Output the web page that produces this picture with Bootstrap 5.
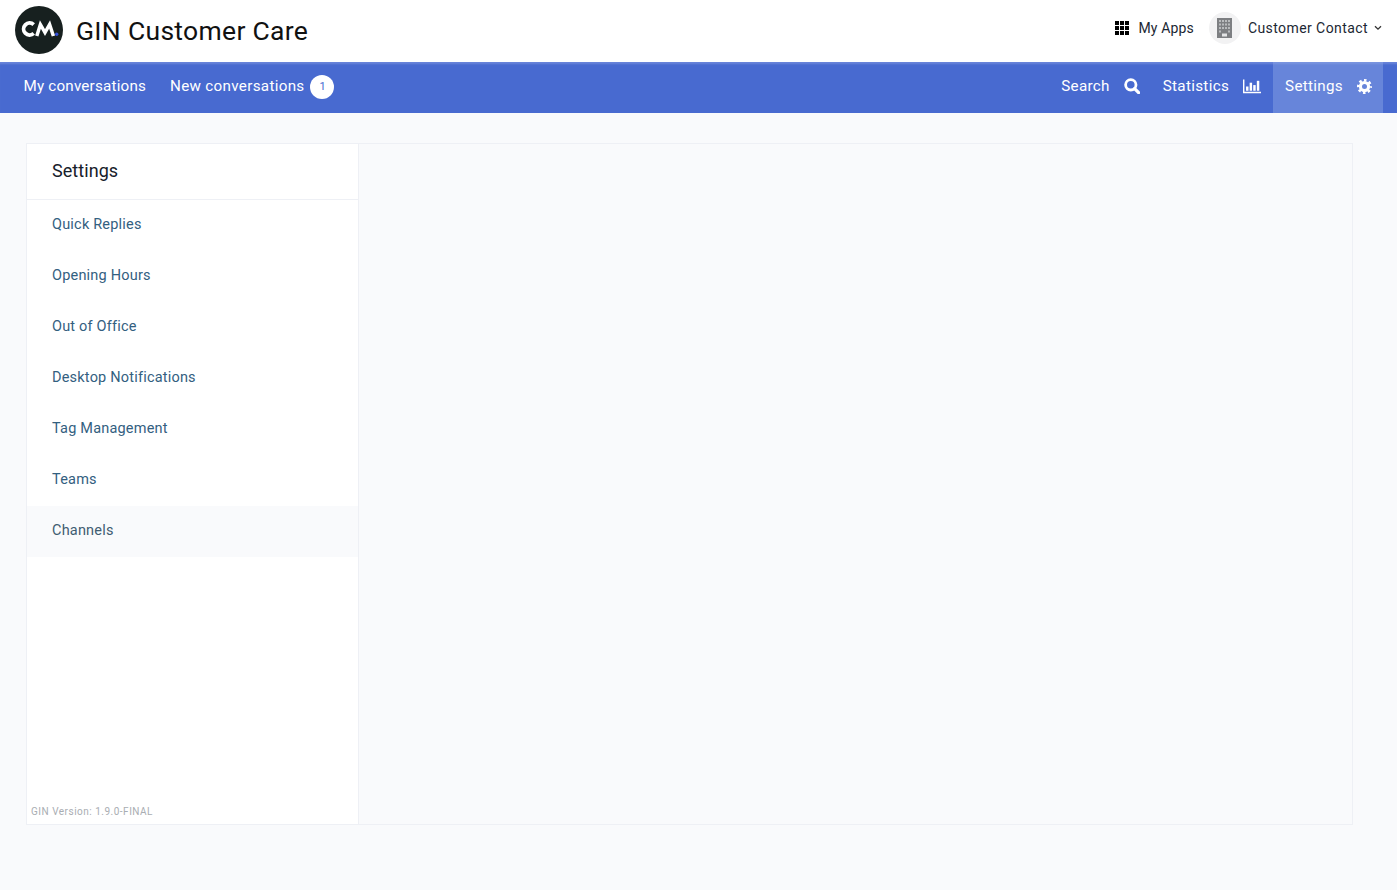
<!DOCTYPE html>
<html lang="en">
<head>
<meta charset="utf-8">
<title>GIN Customer Care</title>
<link rel="stylesheet" href="https://cdn.jsdelivr.net/npm/bootstrap@5.3.0/dist/css/bootstrap.min.css">
<style>
html,body{height:100%}
body{background:#f9fafc;font-family:"Roboto","Liberation Sans",sans-serif;color:#16202a;overflow:hidden}
.top-head{height:62px;background:#fff;padding:0 15px}
.logo-mark{margin-bottom:2px}
.brand-name{font-size:26.5px;line-height:32px;color:#111;margin-left:13px;font-weight:400;letter-spacing:.3px}
.top-group{padding-bottom:6px}
.top-link{font-size:14px;color:#1b2733;text-decoration:none;letter-spacing:.42px}
.apps-link{letter-spacing:.15px;margin-right:15px}
.apps-link svg{margin-right:9px}
.avatar-disc{width:32px;height:32px;border-radius:50%;background:#f2f2f3;margin-right:7px}
.chev-mark{margin-left:6px}
.blue-bar{height:51px;background:#486ad0;box-shadow:inset 0 3px 2px -1px #6a85da;padding:0 14px 0 11.500px}
.bar-link{display:flex;align-items:center;height:100%;padding:0 12px 3px;color:#fff;font-size:15.200px;letter-spacing:.2px;text-decoration:none}
.bar-link svg{margin-left:14px}
.wide-track{letter-spacing:.31px}
.search-link{padding-right:11px}
.bar-link.current{background:#6785da;box-shadow:inset 0 3px 2px -1px #7b95e0;padding-right:11px}
.count-pill{width:24px;height:24px;border-radius:50%;background:#fff;color:#486ad0;font-size:11px;margin-left:6px;position:relative;top:1px;letter-spacing:0}
.panel-wrap{margin:30px 44px 0 26px;height:682px;border:1px solid #eef0f5;background:#f9fafc}
.side-col{width:332px;background:#fff;border-right:1px solid #eef0f5;position:relative}
.side-title{height:56px;padding:0 25px 2px;font-size:18px;letter-spacing:.05px;color:#16202a;border-bottom:1px solid #eef0f5}
.side-item{display:flex;align-items:center;height:51px;padding:0 25px 2px;font-size:14.500px;letter-spacing:.2px;color:#33607f;text-decoration:none}
.side-item.current{background:#f9fafc;color:#3f5d72}
.version-note{position:absolute;left:4px;bottom:5px;font-size:10px;letter-spacing:.5px;color:#a9adb2}
</style>
</head>
<body>
<header class="top-head d-flex align-items-center justify-content-between">
  <a class="d-flex align-items-center text-decoration-none" href="#">
    <svg class="logo-mark" width="48" height="48" viewBox="0 0 48 48" aria-label="CM logo">
      <circle cx="24" cy="24" r="24" fill="#17201f"/>
      <path d="M18.700 18.600a6 6 0 1 0 0 8.800" fill="none" stroke="#fff" stroke-width="3.800"/>
      <path d="M21.800 30l3.600-11.500 4.600 8 4.600-8L38.400 30" fill="none" stroke="#fff" stroke-width="3.500" stroke-linejoin="miter"/>
      <circle cx="41.700" cy="28.300" r="1.700" fill="#3450d8"/>
    </svg>
    <span class="brand-name">GIN Customer Care</span>
  </a>
  <div class="top-group d-flex align-items-center">
    <a href="#" class="top-link apps-link d-flex align-items-center">
      <svg width="14" height="14" viewBox="0 0 15 15" fill="#000"><rect x="0" y="0" width="4.300" height="4.300"/><rect x="5.350" y="0" width="4.300" height="4.300"/><rect x="10.700" y="0" width="4.300" height="4.300"/><rect x="0" y="5.350" width="4.300" height="4.300"/><rect x="5.350" y="5.350" width="4.300" height="4.300"/><rect x="10.700" y="5.350" width="4.300" height="4.300"/><rect x="0" y="10.700" width="4.300" height="4.300"/><rect x="5.350" y="10.700" width="4.300" height="4.300"/><rect x="10.700" y="10.700" width="4.300" height="4.300"/></svg>
      My Apps
    </a>
    <span class="avatar-disc d-flex align-items-center justify-content-center">
      <svg width="15" height="20" viewBox="0 0 15 20"><rect width="15" height="20" fill="#7d7f82"/><g fill="#b9bbbd"><rect x="2" y="2" width="2" height="2"/><rect x="5" y="2" width="2" height="2"/><rect x="8" y="2" width="2" height="2"/><rect x="11" y="2" width="2" height="2"/><rect x="2" y="5.500" width="2" height="2"/><rect x="5" y="5.500" width="2" height="2"/><rect x="8" y="5.500" width="2" height="2"/><rect x="11" y="5.500" width="2" height="2"/><rect x="2" y="9" width="2" height="2"/><rect x="5" y="9" width="2" height="2"/><rect x="8" y="9" width="2" height="2"/><rect x="11" y="9" width="2" height="2"/><rect x="2" y="12.500" width="2" height="2"/><rect x="11" y="12.500" width="2" height="2"/><rect x="5" y="15.500" width="5" height="3" fill="#e4e5e6"/></g></svg>
    </span>
    <a href="#" class="top-link d-flex align-items-center">
      Customer Contact
      <svg class="chev-mark" width="8" height="6" viewBox="0 0 8 6"><path d="M1 1.200l3 3 3-3" fill="none" stroke="#333" stroke-width="1.300"/></svg>
    </a>
  </div>
</header>
<nav class="blue-bar d-flex justify-content-between">
  <div class="d-flex">
    <a class="bar-link" href="#">My conversations</a>
    <a class="bar-link wide-track" href="#">New conversations<span class="count-pill d-flex align-items-center justify-content-center">1</span></a>
  </div>
  <div class="d-flex">
    <a class="bar-link wide-track search-link" href="#">Search
      <svg width="16" height="16" viewBox="0 0 16 16"><circle cx="6.800" cy="6.800" r="5.200" fill="none" stroke="#fff" stroke-width="2.800"/><path d="M10.600 10.600l4 4" stroke="#fff" stroke-width="3.200" stroke-linecap="round"/></svg>
    </a>
    <a class="bar-link wide-track" href="#">Statistics
      <svg width="18" height="15" viewBox="0 0 19 15" fill="#fff"><path d="M0 0h1.500v13H19v1.500H0z"/><rect x="3.200" y="7.500" width="2.600" height="4.500"/><rect x="7" y="3.500" width="2.600" height="8.500"/><rect x="10.800" y="6" width="2.600" height="6"/><rect x="14.600" y="1.500" width="2.600" height="10.500"/></svg>
    </a>
    <a class="bar-link wide-track current" href="#">Settings
      <svg width="15" height="15" viewBox="0 0 24 24" fill="none" stroke="#fff"><circle cx="12" cy="12" r="6.500" stroke-width="5"/><circle cx="12" cy="12" r="10" stroke-width="4" stroke-dasharray="4 3.854" stroke-dashoffset="2"/></svg>
    </a>
  </div>
</nav>
<main class="panel-wrap d-flex">
  <aside class="side-col flex-shrink-0">
    <div class="side-title d-flex align-items-center">Settings</div>
    <a class="side-item" href="#">Quick Replies</a>
    <a class="side-item" href="#">Opening Hours</a>
    <a class="side-item" href="#">Out of Office</a>
    <a class="side-item" href="#">Desktop Notifications</a>
    <a class="side-item" href="#">Tag Management</a>
    <a class="side-item" href="#">Teams</a>
    <a class="side-item current" href="#">Channels</a>
    <div class="version-note">GIN Version: 1.9.0-FINAL</div>
  </aside>
  <section class="flex-grow-1"></section>
</main>
<script src="https://cdn.jsdelivr.net/npm/bootstrap@5.3.0/dist/js/bootstrap.bundle.min.js"></script>
</body>
</html>
